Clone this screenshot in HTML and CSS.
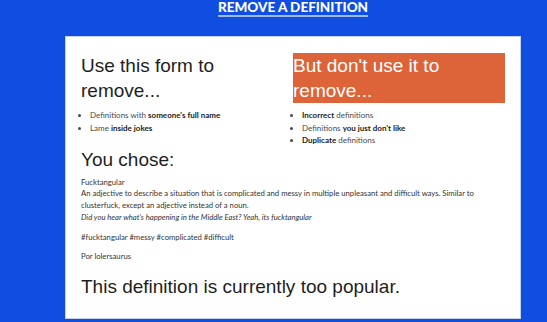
FILE: index.html
```html
<!DOCTYPE html>
<html>
<head>
<meta charset="utf-8">
<link rel="stylesheet" href="styles.css">
</head>
<body>
<header class="top">
  <h1 class="title">REMOVE A DEFINITION</h1>
</header>
<main class="card">
  <div class="cols">
    <section class="col">
      <h2 class="heading">Use this form to remove...</h2>
      <ul class="list">
        <li>Definitions with <b>someone's full name</b></li>
        <li>Lame <b>inside jokes</b></li>
      </ul>
    </section>
    <section class="col">
      <h2 class="heading warn">But don't use it to remove...</h2>
      <ul class="list">
        <li><b>Incorrect</b> definitions</li>
        <li>Definitions <b>you just don't like</b></li>
        <li><b>Duplicate</b> definitions</li>
      </ul>
    </section>
  </div>
  <h2 class="heading chose">You chose:</h2>
  <div class="def">
    <div>Fucktangular</div>
    <div>An adjective to describe a situation that is complicated and messy in multiple unpleasant and difficult ways. Similar to clusterfuck, except an adjective instead of a noun.</div>
    <div class="ex">Did you hear what's happening in the Middle East? Yeah, its fucktangular</div>
    <p class="tags">#fucktangular #messy #complicated #difficult</p>
    <p class="by">Por lolersaurus</p>
  </div>
  <h2 class="heading popular">This definition is currently too popular.</h2>
</main>
</body>
</html>
```
FILE: styles.css
```css
html, body {
  margin: 0;
  padding: 0;
}
body {
  background: #104ee2;
  width: 547px;
  height: 322px;
  overflow: hidden;
  font-family: Lato, "Liberation Sans", sans-serif;
}
.top {
  display: flex;
  justify-content: center;
  padding-left: 39px;
  padding-top: 1px;
  height: 35px;
}
.title {
  margin: 0;
  height: 13px;
  font-size: 13.5px;
  line-height: 13px;
  font-weight: 900;
  color: #fff;
  border-bottom: 2px solid #9fb7d8;
  padding-bottom: 1px;
}
.card {
  margin-left: 65px;
  width: 424px;
  height: 265px;
  background: #fff;
  border: 1px solid #c9d2e4;
  padding: 16px 15px 0 15px;
  box-sizing: content-box;
}
.cols {
  display: grid;
  grid-template-columns: 212px 212px;
}
.heading {
  margin: 0;
  font-family: "Liberation Sans", Arial, sans-serif;
  font-weight: normal;
  font-size: 19px;
  line-height: 25px;
  color: #1e1e1e;
}
.warn {
  background: #dd6338;
  color: #fff;
  height: 50px;
}
.list {
  margin: 6px 0 0 0;
  padding-left: 9px;
  font-size: 8px;
  line-height: 12.5px;
  color: #4a4a4a;
}
.list b {
  color: #222;
  font-weight: 700;
}
.chose {
  margin-top: 0;
}
.def {
  font-size: 7.7px;
  line-height: 11.7px;
  color: #333;
  margin-top: 5px;
}
.ex {
  font-style: italic;
}
.tags {
  margin: 9px 0 0 0;
}
.by {
  margin: 7px 0 0 0;
}
.popular {
  margin-top: 11px;
}
```
